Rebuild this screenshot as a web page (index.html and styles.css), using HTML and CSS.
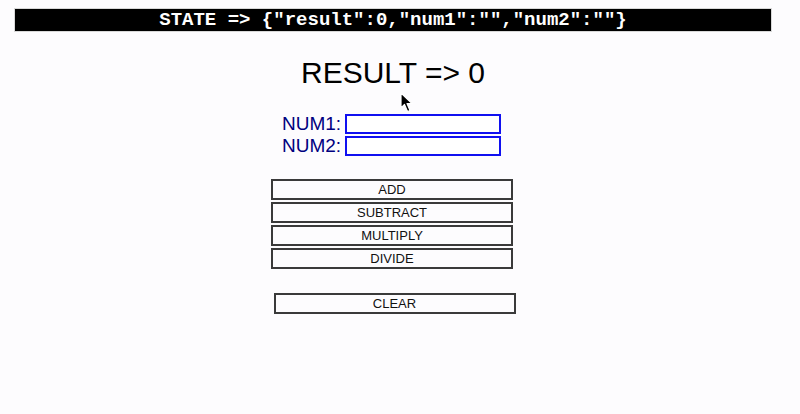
FILE: index.html
```html
<!DOCTYPE html>
<html>
<head>
<meta charset="utf-8">
<link rel="stylesheet" href="styles.css">
</head>
<body>
<div class="page">
  <div class="state">STATE =&gt; {"result":0,"num1":"","num2":""}</div>
  <h1 class="result">RESULT =&gt; 0</h1>
  <div class="fields">
    <label class="field"><span class="lbl">NUM1:</span><input class="num" type="text"></label>
    <label class="field"><span class="lbl">NUM2:</span><input class="num" type="text"></label>
  </div>
  <div class="ops">
    <button class="btn">ADD</button>
    <button class="btn">SUBTRACT</button>
    <button class="btn">MULTIPLY</button>
    <button class="btn">DIVIDE</button>
  </div>
  <button class="btn clear">CLEAR</button>
</div>
<svg class="cursor" width="14" height="22" viewBox="0 0 14 22">
  <path d="M1 1 L1 16 L4.5 12.5 L7.5 19.5 L10 18.5 L7 11.5 L12 11.5 Z" fill="#000" stroke="#fff" stroke-width="1.2" stroke-linejoin="round"/>
</svg>
</body>
</html>
```
FILE: styles.css
```css
html, body {
  margin: 0;
  padding: 0;
  background: #fdfcfe;
}
.page {
  width: 784px;
  display: flex;
  flex-direction: column;
  align-items: center;
  font-family: "Liberation Sans", Arial, sans-serif;
}
.state {
  margin-top: 9px;
  margin-left: 2px;
  width: 756px;
  height: 22px;
  background: #000;
  color: #fff;
  font-family: "Liberation Mono", "Courier New", monospace;
  font-weight: bold;
  font-size: 19px;
  line-height: 22px;
  text-align: center;
  box-shadow: 0 0 0 1px #d8d8d8;
}
.result {
  margin: 24px 0 0 2px;
  font-weight: normal;
  font-size: 30px;
  line-height: 36px;
  color: #000;
}
.fields {
  margin-top: 23px;
  margin-right: 1px;
  display: flex;
  flex-direction: column;
  gap: 2px;
}
.field {
  display: flex;
  align-items: center;
  gap: 4px;
  height: 20px;
}
.lbl {
  color: #000080;
  font-size: 19px;
  line-height: 20px;
}
.num {
  box-sizing: border-box;
  width: 156px;
  height: 20px;
  margin: 0;
  padding: 0 2px;
  border: 2px solid #1010f0;
  background: #fff;
  outline: none;
}
.ops {
  margin-top: 23px;
  display: flex;
  flex-direction: column;
  gap: 2px;
}
.btn {
  box-sizing: border-box;
  width: 242px;
  height: 21px;
  margin: 0;
  padding: 0;
  border: 2px solid #3a3a3a;
  background: #fdfcfe;
  color: #111;
  font-family: "Liberation Sans", Arial, sans-serif;
  font-size: 13px;
  line-height: 17px;
  text-align: center;
}
.clear {
  margin-top: 24px;
  margin-left: 5px;
}
.cursor {
  position: absolute;
  left: 400px;
  top: 92px;
}
```
